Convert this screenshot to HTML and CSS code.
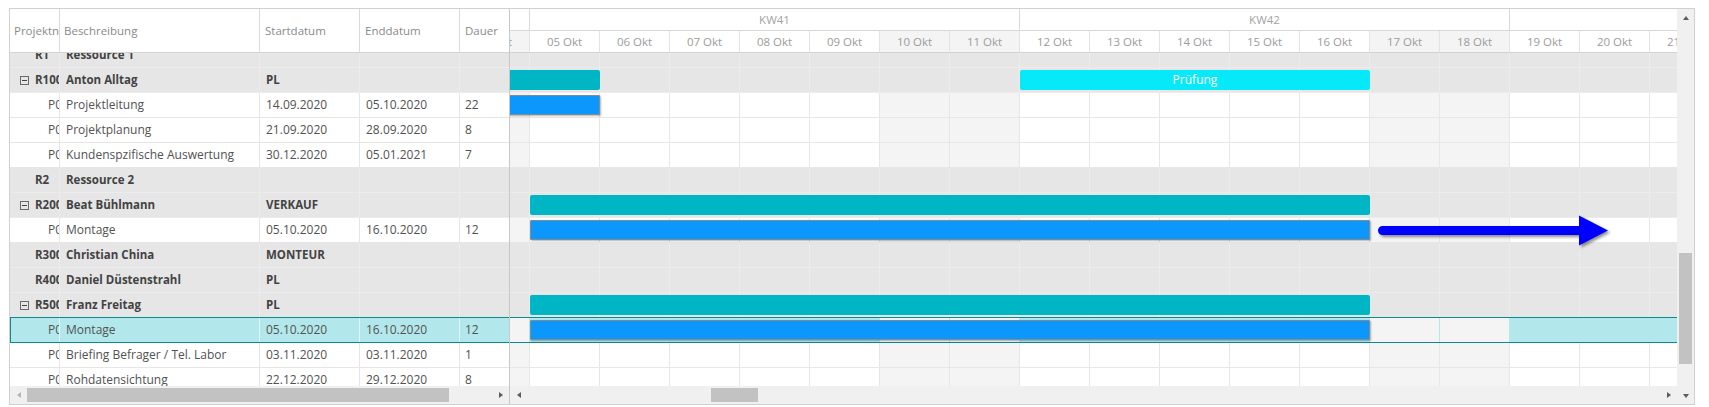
FILE: index.html
```html
<!DOCTYPE html>
<html lang="de">
<head>
<meta charset="utf-8">
<title>Ressourcenplanung</title>
<link rel="stylesheet" href="styles.css">
</head>
<body>
<div class="gantt">

  <!-- Tabellenbereich links -->
  <section class="grid-pane">
    <div class="grid-head">
      <div class="hc">Projektnummer</div>
      <div class="hc">Beschreibung</div>
      <div class="hc">Startdatum</div>
      <div class="hc">Enddatum</div>
      <div class="hc">Dauer</div>
    </div>
    <div class="grid-body">
      <div class="rows">
        <div class="row grp">
          <div class="cell id">R1</div><div class="cell">Ressource 1</div><div class="cell"></div><div class="cell"></div><div class="cell"></div>
        </div>
        <div class="row grp">
          <div class="cell id tog"><span class="exp"></span>R100</div><div class="cell">Anton Alltag</div><div class="cell">PL</div><div class="cell"></div><div class="cell"></div>
        </div>
        <div class="row">
          <div class="cell id sub">P0011</div><div class="cell">Projektleitung</div><div class="cell">14.09.2020</div><div class="cell">05.10.2020</div><div class="cell">22</div>
        </div>
        <div class="row">
          <div class="cell id sub">P0012</div><div class="cell">Projektplanung</div><div class="cell">21.09.2020</div><div class="cell">28.09.2020</div><div class="cell">8</div>
        </div>
        <div class="row">
          <div class="cell id sub">P0013</div><div class="cell">Kundenspzifische Auswertung</div><div class="cell">30.12.2020</div><div class="cell">05.01.2021</div><div class="cell">7</div>
        </div>
        <div class="row grp">
          <div class="cell id">R2</div><div class="cell">Ressource 2</div><div class="cell"></div><div class="cell"></div><div class="cell"></div>
        </div>
        <div class="row grp">
          <div class="cell id tog"><span class="exp"></span>R200</div><div class="cell">Beat Bühlmann</div><div class="cell">VERKAUF</div><div class="cell"></div><div class="cell"></div>
        </div>
        <div class="row">
          <div class="cell id sub">P0021</div><div class="cell">Montage</div><div class="cell">05.10.2020</div><div class="cell">16.10.2020</div><div class="cell">12</div>
        </div>
        <div class="row grp">
          <div class="cell id">R300</div><div class="cell">Christian China</div><div class="cell">MONTEUR</div><div class="cell"></div><div class="cell"></div>
        </div>
        <div class="row grp">
          <div class="cell id">R400</div><div class="cell">Daniel Düstenstrahl</div><div class="cell">PL</div><div class="cell"></div><div class="cell"></div>
        </div>
        <div class="row grp">
          <div class="cell id tog"><span class="exp"></span>R500</div><div class="cell">Franz Freitag</div><div class="cell">PL</div><div class="cell"></div><div class="cell"></div>
        </div>
        <div class="row sel">
          <div class="cell id sub">P0051</div><div class="cell">Montage</div><div class="cell">05.10.2020</div><div class="cell">16.10.2020</div><div class="cell">12</div>
        </div>
        <div class="row">
          <div class="cell id sub">P0052</div><div class="cell">Briefing Befrager / Tel. Labor</div><div class="cell">03.11.2020</div><div class="cell">03.11.2020</div><div class="cell">1</div>
        </div>
        <div class="row">
          <div class="cell id sub">P0053</div><div class="cell">Rohdatensichtung</div><div class="cell">22.12.2020</div><div class="cell">29.12.2020</div><div class="cell">8</div>
        </div>
      </div>
    </div>
    <div class="hscroll">
      <span class="sb-btn"><i class="tri tri-left dim"></i></span>
      <span class="sb-track"><span class="thumb" style="margin-left:0;width:422px"></span></span>
      <span class="sb-btn"><i class="tri tri-right"></i></span>
    </div>
  </section>

  <!-- Zeitachse rechts -->
  <section class="chart-pane">
    <div class="chart-head">
      <div class="timeline">
        <div class="weeks">
          <div class="week">KW40</div>
          <div class="week">KW41</div>
          <div class="week">KW42</div>
          <div class="week">KW43</div>
        </div>
        <div class="days">
          <div class="day">28 Sep</div><div class="day">29 Sep</div><div class="day">30 Sep</div><div class="day">01 Okt</div><div class="day">02 Okt</div><div class="day we">03 Okt</div><div class="day we">04 Okt</div>
          <div class="day">05 Okt</div><div class="day">06 Okt</div><div class="day">07 Okt</div><div class="day">08 Okt</div><div class="day">09 Okt</div><div class="day we">10 Okt</div><div class="day we">11 Okt</div>
          <div class="day">12 Okt</div><div class="day">13 Okt</div><div class="day">14 Okt</div><div class="day">15 Okt</div><div class="day">16 Okt</div><div class="day we">17 Okt</div><div class="day we">18 Okt</div>
          <div class="day">19 Okt</div><div class="day">20 Okt</div><div class="day">21 Okt</div><div class="day">22 Okt</div><div class="day">23 Okt</div><div class="day we">24 Okt</div><div class="day we">25 Okt</div>
        </div>
      </div>
    </div>
    <div class="chart-body">
      <div class="timeline g-rows">
        <div class="g-row grp"></div>
        <div class="g-row grp">
          <span class="bar sum" style="left:-980px;width:1540px"></span>
          <span class="bar milestone" style="left:980px;width:350px">Prüfung</span>
        </div>
        <div class="g-row"><span class="bar task" style="left:-980px;width:1540px"></span></div>
        <div class="g-row"></div>
        <div class="g-row"></div>
        <div class="g-row grp"></div>
        <div class="g-row grp"><span class="bar sum" style="left:490px;width:840px"></span></div>
        <div class="g-row"><span class="bar task" style="left:490px;width:840px"></span></div>
        <div class="g-row grp"></div>
        <div class="g-row grp"></div>
        <div class="g-row grp"><span class="bar sum" style="left:490px;width:840px"></span></div>
        <div class="g-row sel"><span class="bar task" style="left:490px;width:840px"></span></div>
        <div class="g-row"></div>
        <div class="g-row"></div>
      </div>
      <svg class="move-arrow" width="250" height="40" viewBox="0 0 250 40" aria-hidden="true">
        <path d="M6.5 12 H203 V1.5 L232 16.5 L203 31.5 V21 H6.5 A4.5 4.5 0 0 1 6.5 12 Z" fill="#0000ff"/>
      </svg>
    </div>
    <div class="hscroll">
      <span class="sb-btn"><i class="tri tri-left"></i></span>
      <span class="sb-track"><span class="thumb" style="margin-left:184px;width:47px"></span></span>
      <span class="sb-btn"><i class="tri tri-right"></i></span>
    </div>
  </section>

  <!-- vertikale Bildlaufleiste -->
  <div class="vscroll">
    <span class="sb-btn"><i class="tri tri-up"></i></span>
    <span class="sb-track"><span class="thumb" style="margin-top:227px;height:111px"></span></span>
    <span class="sb-btn"><i class="tri tri-down"></i></span>
  </div>
</div>
</body>
</html>
```

FILE: styles.css
```css
* {
  box-sizing: border-box;
}

body {
  margin: 0;
  background: #fff;
  font-family: "Open Sans", "Noto Sans", sans-serif;
  font-size: 11.5px;
}

.gantt {
  margin: 8px 0 0 9px;
  width: 1686px;
  height: 397px;
  border: 1px solid #d0d0d0;
  display: flex;
  overflow: hidden;
}

/* ---------- Tabelle ---------- */

.grid-pane {
  width: 500px;
  flex: none;
  display: flex;
  flex-direction: column;
  border-right: 1px solid #c8c8c8;
}

.grid-head,
.row {
  display: grid;
  grid-template-columns: 50px 200px 100px 100px 49px;
}

.grid-head {
  height: 44px;
  flex: none;
  background: #fff;
  border-bottom: 1px solid #d3d3d3;
}

.hc {
  padding-left: 5px;
  line-height: 43px;
  color: #8a8a8a;
  white-space: nowrap;
  overflow: hidden;
  border-right: 1px solid #dadada;
}

.hc:first-child,
.hc:nth-child(2) {
  padding-left: 4px;
}

.hc:last-child {
  border-right: 0;
}

.grid-body {
  flex: 1;
  overflow: hidden;
}

.rows {
  margin-top: -10px;
}

.row {
  height: 25px;
  background: #fff;
  color: #525252;
  font-size: 12px;
  border-bottom: 1px solid #e6e6e6;
}

.cell {
  padding: 0 6px;
  line-height: 24px;
  white-space: nowrap;
  overflow: hidden;
  border-right: 1px solid #e6e6e6;
}

.cell:last-child {
  border-right: 0;
  padding-left: 5px;
}

.cell.id {
  padding-left: 25px;
  padding-right: 0;
}

.cell.sub {
  padding-left: 38px;
}

.cell.tog {
  padding-left: 10px;
  display: flex;
  align-items: center;
  gap: 6px;
}

.exp {
  width: 9px;
  height: 9px;
  flex: none;
  border: 1px solid #6a6a6a;
  display: flex;
  align-items: center;
  justify-content: center;
}

.exp::after {
  content: "";
  width: 5px;
  height: 1px;
  background: #444;
}

.row.grp {
  background: #e6e6e6;
  color: #434343;
  font-size: 11.5px;
  font-weight: 700;
  border-bottom-color: #ececec;
}

.row.grp .cell {
  border-right-color: #ececec;
}

.row.sel {
  background: #b2e8eb;
  border-bottom-color: #0b8a92;
  box-shadow: 0 -1px 0 #0b8a92, inset 1px 0 0 #0b8a92;
}

.row.sel .cell {
  border-right-color: #dff5f6;
}

/* ---------- Zeitachse ---------- */

.chart-pane {
  flex: 1;
  min-width: 0;
  display: flex;
  flex-direction: column;
  overflow: hidden;
}

.chart-head {
  height: 44px;
  flex: none;
  overflow: hidden;
}

.timeline {
  width: 1960px;
  margin-left: -470px;
}

.weeks,
.days {
  display: flex;
  height: 22px;
}

.weeks {
  border-bottom: 1px solid #d8d8d8;
}

.days {
  border-bottom: 1px solid #d3d3d3;
}

.week {
  width: 490px;
  flex: none;
  text-align: center;
  line-height: 21px;
  color: #a3a3a3;
  border-right: 1px solid #d8d8d8;
}

.day {
  width: 70px;
  flex: none;
  text-align: center;
  line-height: 21px;
  color: #9c9c9c;
  border-right: 1px solid #e3e3e3;
}

.day.we {
  background: #f4f4f4;
}

.chart-body {
  flex: 1;
  overflow: hidden;
  position: relative;
}

.g-rows {
  margin-top: -10px;
}

.g-row {
  --work: #fff;
  --weekend: #f4f4f4;
  --line: #e7e7e7;
  position: relative;
  height: 25px;
  border-bottom: 1px solid var(--line);
  background:
    repeating-linear-gradient(90deg, transparent 0 69px, var(--line) 69px 70px),
    repeating-linear-gradient(90deg, var(--work) 0 350px, var(--weekend) 350px 490px);
}

.g-row.grp {
  --work: #e6e6e6;
  --weekend: #e6e6e6;
  --line: #ececec;
}

.g-row.sel {
  --work: #b2e8eb;
  --line: #b2e8eb;
  border-bottom-color: #0b8a92;
  box-shadow: 0 -1px 0 #0b8a92;
}

.bar {
  position: absolute;
  top: 2px;
  height: 20px;
}

.bar.sum {
  background: #00b6c4;
  border-radius: 2px;
}

.bar.milestone {
  background: #07e9f9;
  border-radius: 2px;
  color: #fff;
  font-size: 12px;
  text-align: center;
  line-height: 20px;
}

.bar.task {
  background: #0c97fd;
  border: 1px solid #7f8c96;
  border-radius: 1px;
  box-shadow: 1px 1px 2px rgba(0, 0, 0, 0.3);
}

.move-arrow {
  position: absolute;
  left: 866px;
  top: 161px;
  filter: drop-shadow(2px 2px 1.5px rgba(0, 0, 0, 0.45));
}

/* ---------- Bildlaufleisten ---------- */

.hscroll {
  height: 18px;
  flex: none;
  display: flex;
  background: #f0f0f0;
}

.hscroll .sb-btn {
  width: 17px;
}

.sb-btn {
  flex: none;
  display: flex;
  align-items: center;
  justify-content: center;
}

.sb-track {
  flex: 1;
  display: flex;
  align-items: center;
}

.hscroll .thumb {
  height: 14px;
}

.thumb {
  flex: none;
  background: #c2c2c2;
}

.vscroll {
  width: 17px;
  flex: none;
  display: flex;
  flex-direction: column;
  background: #f0f0f0;
}

.vscroll .sb-btn {
  height: 17px;
}

.vscroll .sb-track {
  flex-direction: column;
  align-items: center;
}

.vscroll .thumb {
  width: 13px;
}

.tri {
  width: 0;
  height: 0;
  border-style: solid;
  border-color: transparent;
}

.tri-left {
  border-width: 3.5px 4px 3.5px 0;
  border-right-color: #5c5c5c;
}

.tri-right {
  border-width: 3.5px 0 3.5px 4px;
  border-left-color: #5c5c5c;
}

.tri-up {
  border-width: 0 3.5px 4px 3.5px;
  border-bottom-color: #5c5c5c;
}

.tri-down {
  border-width: 4px 3.5px 0 3.5px;
  border-top-color: #5c5c5c;
}

.tri-left.dim {
  border-right-color: #b5b5b5;
}
```
